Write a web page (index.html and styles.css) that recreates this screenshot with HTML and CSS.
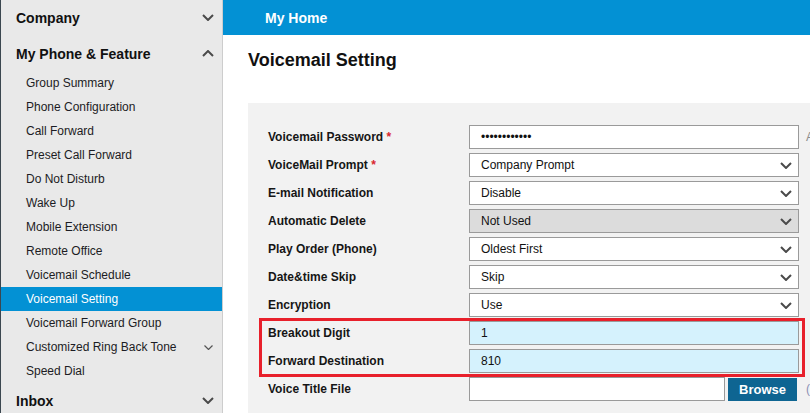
FILE: index.html
```html
<!DOCTYPE html>
<html lang="en">
<head>
<meta charset="utf-8">
<title>Voicemail Setting</title>
<link rel="stylesheet" href="styles.css">
</head>
<body>
<div class="app">
  <aside class="sidebar">
    <div class="sec-head"><span>Company</span>
      <svg class="chev" viewBox="0 0 12 7" width="12" height="7"><path d="M1 1 L6 6 L11 1"/></svg></div>
    <div class="sec-head open"><span>My Phone &amp; Feature</span>
      <svg class="chev" viewBox="0 0 12 7" width="12" height="7"><path d="M1 6 L6 1 L11 6"/></svg></div>
    <ul class="menu">
      <li>Group Summary</li>
      <li>Phone Configuration</li>
      <li>Call Forward</li>
      <li>Preset Call Forward</li>
      <li>Do Not Disturb</li>
      <li>Wake Up</li>
      <li>Mobile Extension</li>
      <li>Remote Office</li>
      <li>Voicemail Schedule</li>
      <li class="active">Voicemail Setting</li>
      <li>Voicemail Forward Group</li>
      <li class="has-sub"><span>Customized Ring Back Tone</span>
        <svg class="chev-sm" viewBox="0 0 9 5" width="9" height="5"><path d="M0.5 0.5 L4.5 4.5 L8.5 0.5"/></svg></li>
      <li>Speed Dial</li>
    </ul>
    <div class="sec-head"><span>Inbox</span>
      <svg class="chev" viewBox="0 0 12 7" width="12" height="7"><path d="M1 1 L6 6 L11 1"/></svg></div>
  </aside>
  <main class="content">
    <header class="topbar">My Home</header>
    <div class="page">
      <h1>Voicemail Setting</h1>
      <div class="panel">
        <div class="form">
          <div class="row">
            <div class="label">Voicemail Password <span class="req">*</span></div>
            <div class="field">••••••••••••</div>
            <span class="hint">A</span>
          </div>
          <div class="row">
            <div class="label">VoiceMail Prompt <span class="req">*</span></div>
            <div class="field select"><span>Company Prompt</span><svg class="chev" viewBox="0 0 12 7" width="12" height="7"><path d="M1 1 L6 6 L11 1"/></svg></div>
          </div>
          <div class="row">
            <div class="label">E-mail Notification</div>
            <div class="field select"><span>Disable</span><svg class="chev" viewBox="0 0 12 7" width="12" height="7"><path d="M1 1 L6 6 L11 1"/></svg></div>
          </div>
          <div class="row">
            <div class="label">Automatic Delete</div>
            <div class="field select disabled"><span>Not Used</span><svg class="chev" viewBox="0 0 12 7" width="12" height="7"><path d="M1 1 L6 6 L11 1"/></svg></div>
          </div>
          <div class="row">
            <div class="label">Play Order (Phone)</div>
            <div class="field select"><span>Oldest First</span><svg class="chev" viewBox="0 0 12 7" width="12" height="7"><path d="M1 1 L6 6 L11 1"/></svg></div>
          </div>
          <div class="row">
            <div class="label">Date&amp;time Skip</div>
            <div class="field select"><span>Skip</span><svg class="chev" viewBox="0 0 12 7" width="12" height="7"><path d="M1 1 L6 6 L11 1"/></svg></div>
          </div>
          <div class="row">
            <div class="label">Encryption</div>
            <div class="field select"><span>Use</span><svg class="chev" viewBox="0 0 12 7" width="12" height="7"><path d="M1 1 L6 6 L11 1"/></svg></div>
          </div>
          <div class="highlight">
            <div class="row">
              <div class="label">Breakout Digit</div>
              <div class="field filled">1</div>
            </div>
            <div class="row">
              <div class="label">Forward Destination</div>
              <div class="field filled">810</div>
            </div>
          </div>
          <div class="row">
            <div class="label">Voice Title File</div>
            <div class="field file"></div>
            <button class="browse" type="button">Browse</button>
            <span class="hint paren">(</span>
          </div>
        </div>
      </div>
    </div>
  </main>
</div>
</body>
</html>
```

FILE: styles.css
```css
* { box-sizing: border-box; }

html, body {
  margin: 0;
  padding: 0;
  height: 413px;
  overflow: hidden;
  font-family: "Liberation Sans", Arial, sans-serif;
  color: #161616;
  background: #ffffff;
}

.app {
  display: flex;
  height: 413px;
  width: 810px;
  overflow: hidden;
}

/* Sidebar */
.sidebar {
  flex: 0 0 223px;
  width: 223px;
  background: #e9e9e9;
  border-left: 1px solid #3b4750;
  border-right: 1px solid #cdcdcd;
  display: flex;
  flex-direction: column;
  overflow: hidden;
}

.sec-head {
  flex: 0 0 35px;
  height: 35px;
  display: flex;
  align-items: center;
  justify-content: space-between;
  padding: 0 8px 0 15px;
  font-size: 14px;
  font-weight: bold;
  color: #111;
}

.sec-head.open {
  margin-top: 1px;
}

.chev path {
  fill: none;
  stroke: #4a4a4a;
  stroke-width: 2;
}

.menu {
  flex: 0 0 auto;
  list-style: none;
  margin: 0;
  padding: 0;
}

.menu li {
  height: 24px;
  display: flex;
  align-items: center;
  justify-content: space-between;
  padding: 0 9px 0 25px;
  font-size: 12px;
  color: #1c1c24;
}

.menu li.active {
  background: #0391d4;
  color: #ffffff;
}

.chev-sm path {
  fill: none;
  stroke: #555;
  stroke-width: 1.2;
}

/* Content */
.content {
  flex: 1;
  display: flex;
  flex-direction: column;
  min-width: 0;
}

.topbar {
  height: 35px;
  flex: 0 0 35px;
  background: #0391d4;
  color: #ffffff;
  font-size: 14px;
  font-weight: bold;
  display: flex;
  align-items: center;
  padding-left: 42px;
}

.page {
  flex: 1;
  display: flex;
  flex-direction: column;
  padding: 15px 0 0 25px;
}

h1 {
  margin: 0 0 32px;
  font-size: 18px;
  line-height: 21px;
  font-weight: bold;
  color: #111;
}

.panel {
  flex: 1;
  background: #f2f2f2;
  padding: 22px 0 0 20px;
}

.form {
  display: flex;
  flex-direction: column;
  gap: 4px;
}

.row {
  display: flex;
  align-items: center;
  height: 24px;
  flex: 0 0 24px;
}

.label {
  flex: 0 0 201px;
  font-size: 12px;
  font-weight: bold;
  color: #161616;
}

.req {
  color: #d9262e;
}

.field {
  flex: 0 0 330px;
  width: 330px;
  height: 24px;
  border: 1px solid #9a9a9a;
  background: #ffffff;
  display: flex;
  align-items: center;
  justify-content: space-between;
  padding: 0 6px 0 11px;
  font-size: 12px;
  color: #111;
}

.field.disabled {
  background: #dcdcdc;
}

.field.filled {
  background: #d5f2fd;
}

.field.file {
  flex: 0 0 256px;
  width: 256px;
}

.browse {
  flex: 0 0 69px;
  margin-left: 3px;
  width: 69px;
  height: 23px;
  border: none;
  background: #0e6592;
  color: #ffffff;
  font-family: "Liberation Sans", Arial, sans-serif;
  font-size: 13px;
  font-weight: bold;
  padding: 0;
}

.hint {
  margin-left: 7px;
  font-size: 12px;
  color: #8c8c8c;
  white-space: nowrap;
}

.hint.paren {
  margin-left: 9px;
  color: #8a90b4;
}

.highlight {
  position: relative;
  display: flex;
  flex-direction: column;
  gap: 4px;
  width: 531px;
}

.highlight::after {
  content: "";
  position: absolute;
  top: -3px;
  left: -9px;
  right: -6px;
  bottom: -4px;
  border: 3px solid #e8202b;
  pointer-events: none;
}
```
